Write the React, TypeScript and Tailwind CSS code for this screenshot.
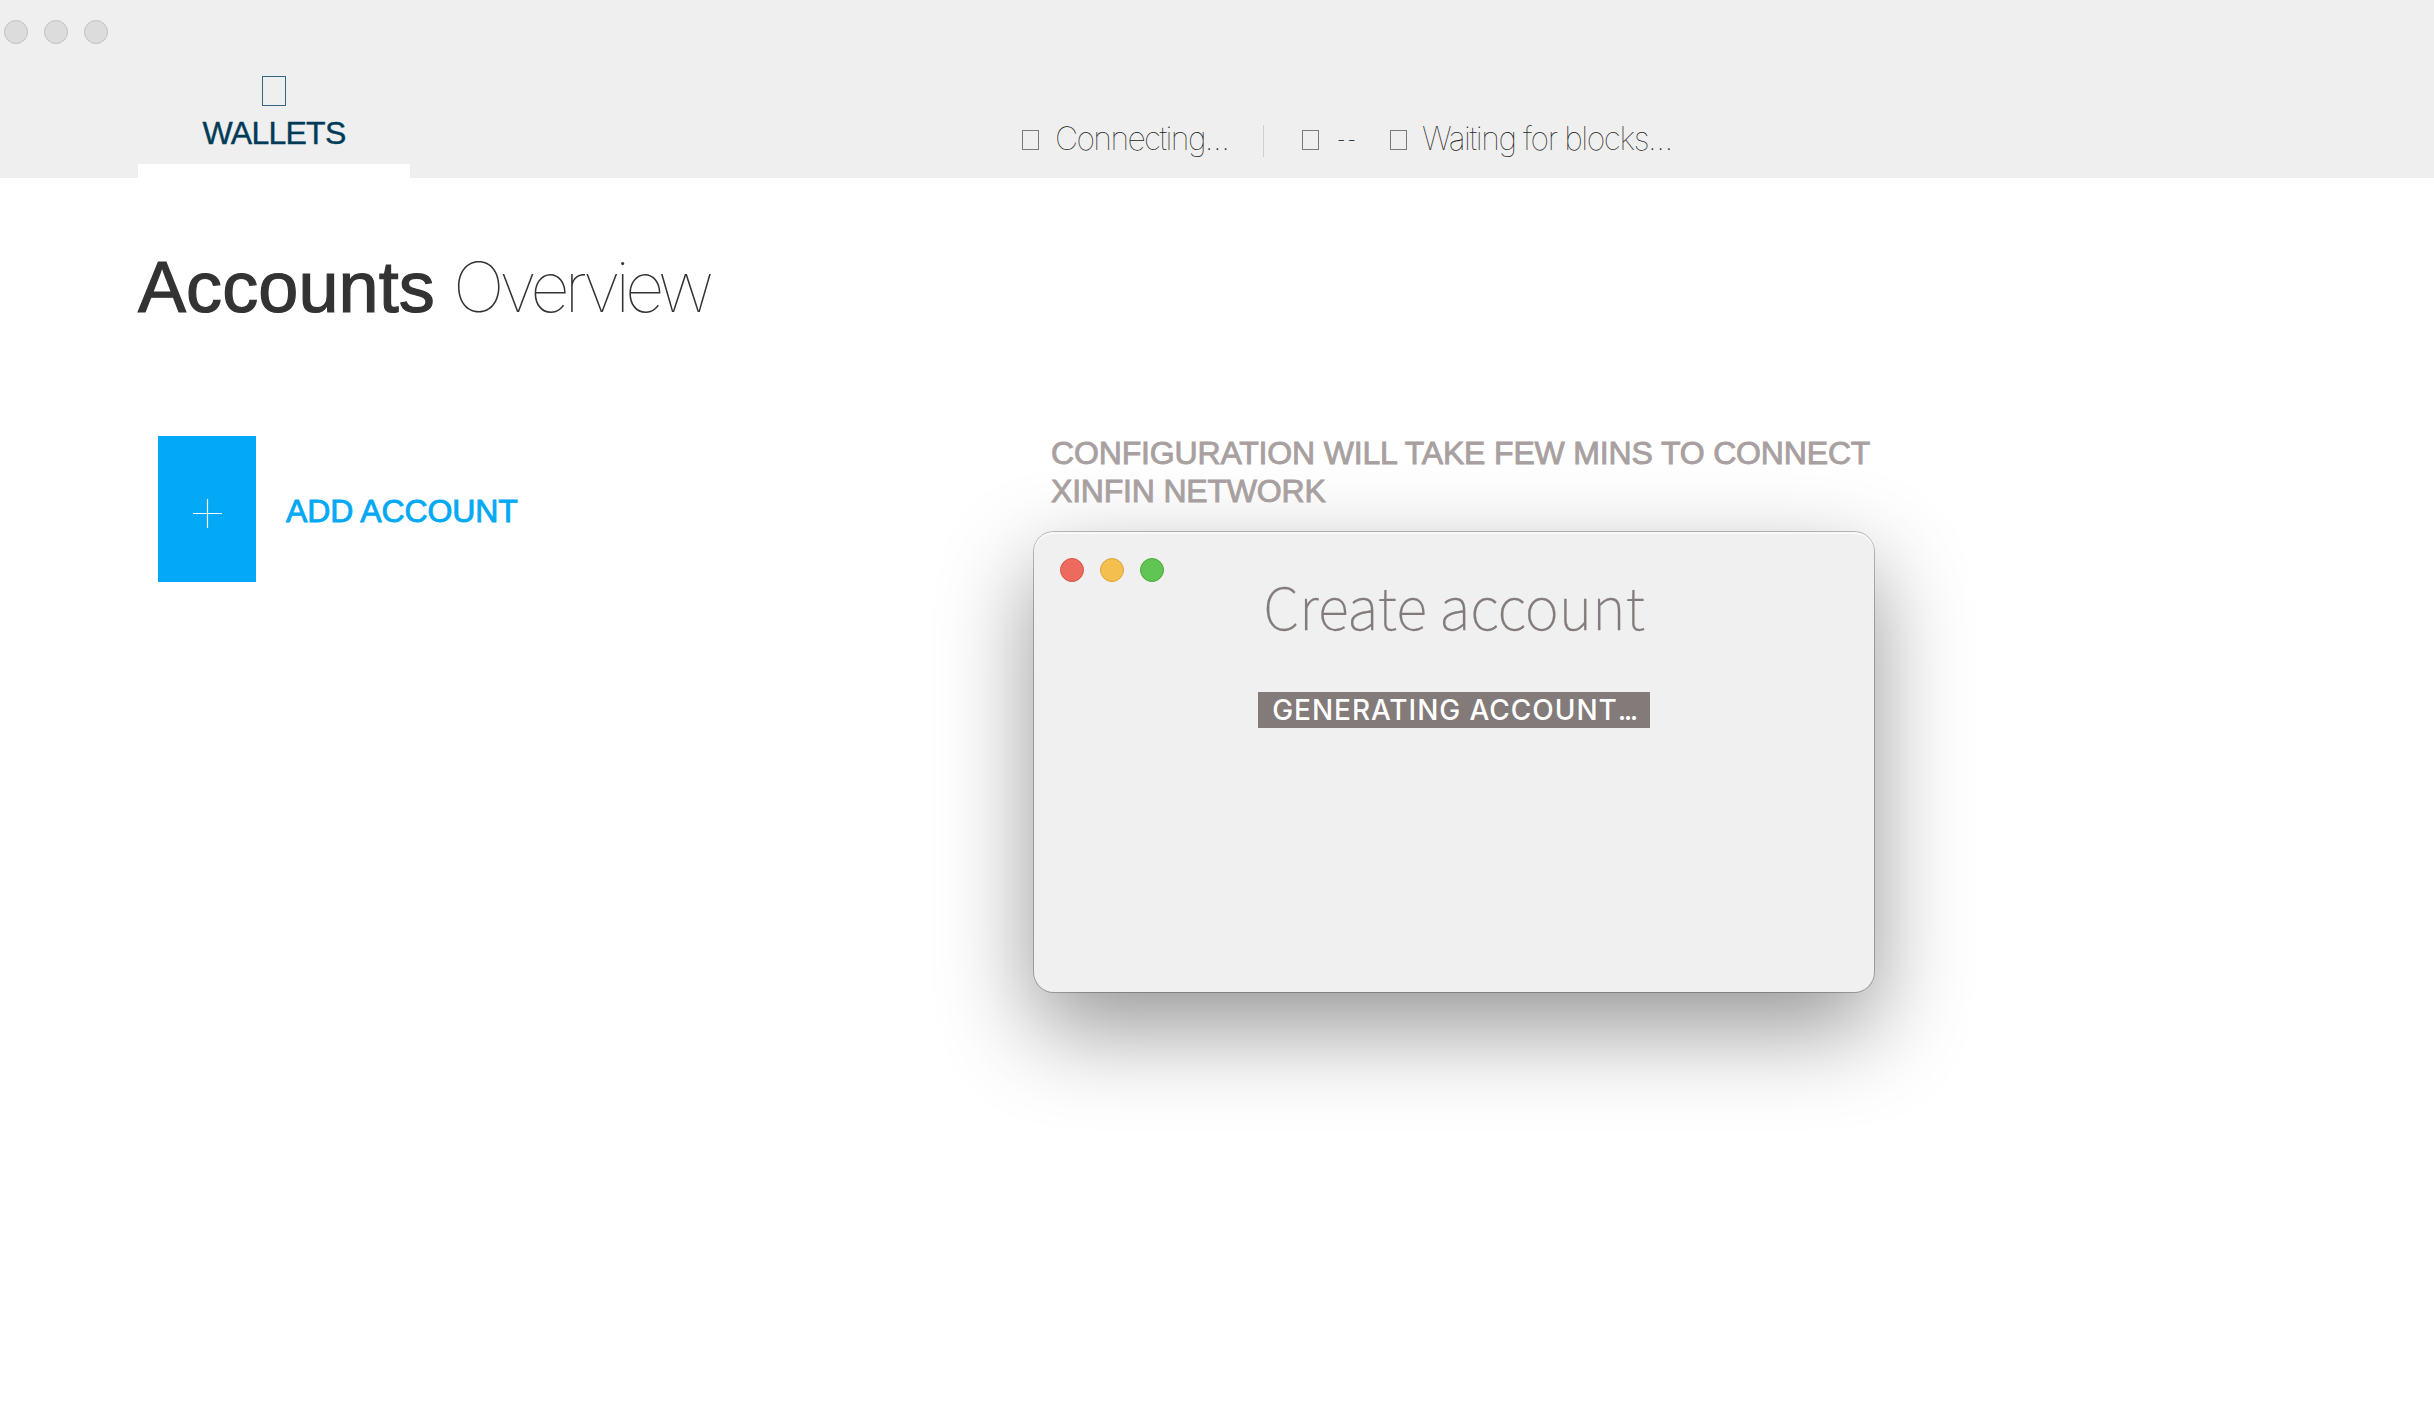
const Glyph = ({ className }: { className: string }) => (
  <span className={`inline-block shrink-0 border ${className}`} aria-hidden="true" />
);

const Dots = ({ colors, className }: { colors: string[]; className: string }) => (
  <div className={`flex gap-4 ${className}`}>
    {colors.map((c, i) => (
      <span key={i} className={`size-6 rounded-full border ${c}`} />
    ))}
  </div>
);

const inactive = "border-[#c2c2c2] bg-[#dcdcdc]";

export default function App() {
  return (
    <div className="flex h-[1424px] w-[2434px] flex-col overflow-hidden bg-white font-['Liberation_Sans',sans-serif] text-[#333]">
      <header className="flex h-[178px] shrink-0 flex-col bg-[#efefef]">
        <Dots className="pt-5 pl-1" colors={[inactive, inactive, inactive]} />
        <div className="flex flex-1 pl-[138px]">
          <nav className="flex w-[272px] flex-col items-center text-[#003c57]">
            <Glyph className="mt-8 h-[30px] w-6 border-[#336680]" />
            <span className="mt-2 block h-[50px] text-[32px] leading-[38px] tracking-[-0.75px] [-webkit-text-stroke:0.4px_#003c57]">WALLETS</span>
            <div className="h-[14px] w-full bg-white" />
          </nav>
          <div className="ml-[612px] mt-[76px] flex h-10 items-center font-['Inter',sans-serif] text-[32px] font-thin leading-10 text-[#222]">
            <Glyph className="h-5 w-[17px] border-[#7a7a7a]" />
            <span className="-mt-[2px] w-[224px] whitespace-nowrap pl-4 tracking-[-1.65px]">
              Connecting<span className="tracking-[-0.4px]">...</span>
            </span>
            <span className="mt-0.5 h-8 w-px bg-[#cfcfcf]" />
            <Glyph className="ml-[38px] h-5 w-[17px] border-[#7a7a7a]" />
            <span className="w-[71px] pl-[18px] text-[19px] font-extralight tracking-[2px]">--</span>
            <Glyph className="h-5 w-[17px] border-[#7a7a7a]" />
            <span className="-mt-[2px] ml-[15px] tracking-[-1.45px]">
              Waiting for blocks<span className="tracking-[-0.4px]">...</span>
            </span>
          </div>
        </div>
      </header>

      <main className="flex flex-1 flex-col px-[138px]">
        <h1 className="mt-[69px] flex h-20 items-center gap-[18px] leading-20">
          <span className="text-[72px] tracking-[0.1px] [-webkit-text-stroke:1.2px_#333]">Accounts</span>
          <span className="font-['Inter',sans-serif] text-[69px] font-thin tracking-[-5.2px]">Overview</span>
        </h1>
        <div className="flex">
          <button className="ml-5 mt-[109px] flex h-[146px] items-center gap-[30px] text-[#03a9f4]">
            <span className="flex h-[146px] w-[98px] items-center justify-center bg-[#03a8f6]">
              <svg className="mt-[9px] size-[29px]" viewBox="0 0 29 29" stroke="#fff" strokeWidth="1.2" fill="none">
                <path d="M0 14.5H29M14.5 0V29" />
              </svg>
            </span>
            <span className="mt-1 text-[32px] tracking-[-0.1px] [-webkit-text-stroke:0.9px_#03a9f4]">ADD ACCOUNT</span>
          </button>
          <section className="ml-auto mr-[422px] mt-[107px] w-[840px]">
            <p className="ml-[17px] text-[32px] leading-[38px] text-[#a8a0a0] [-webkit-text-stroke:0.9px_#a8a0a0]">
              <span className="block whitespace-nowrap tracking-[-0.16px]">CONFIGURATION WILL TAKE FEW MINS TO CONNECT</span>
              <span className="block tracking-[-0.2px]">XINFIN NETWORK</span>
            </p>
            <div className="mt-[22px] flex h-[460px] flex-col items-center rounded-[20px] bg-[#f0f0f0] shadow-[0_0_0_1px_rgba(0,0,0,0.25),0_36px_94px_rgba(0,0,0,0.42),inset_0_2px_0_#f8f8f8]">
              <Dots
                className="self-start pl-[26px] pt-[26px]"
                colors={["border-[#d95549] bg-[#ed6a5e]", "border-[#dba43c] bg-[#f5bf4f]", "border-[#4fa73c] bg-[#61c554]"]}
              />
              <h2 className="font-['Noto_Sans_CJK_SC',sans-serif] text-[58px] font-thin leading-[46px] tracking-[-0.15px] text-[#837a7a] [-webkit-text-stroke:0.3px_#837a7a]">
                Create account
              </h2>
              <div className="mt-16 flex h-9 w-[392px] items-center justify-center bg-[#837a7a] font-['Inter',sans-serif] text-[28px] font-medium tracking-[0.95px] text-white">
                GENERATING ACCOUNT<span className="tracking-[-2.5px]">...</span>
              </div>
            </div>
          </section>
        </div>
      </main>
    </div>
  );
}
